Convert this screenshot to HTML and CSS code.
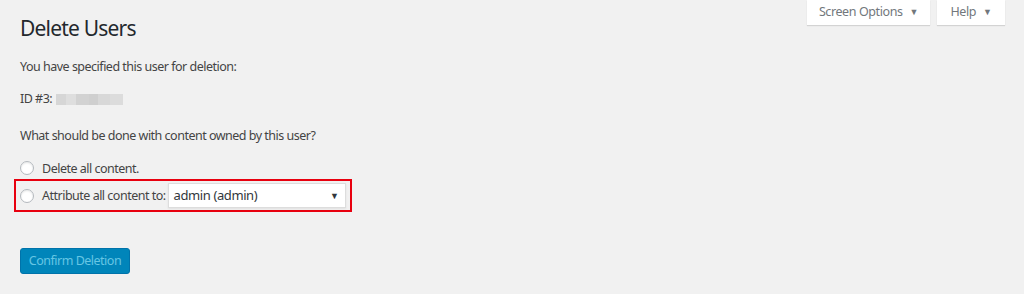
FILE: index.html
```html
<!DOCTYPE html>
<html>
<head>
<meta charset="utf-8">
<link rel="stylesheet" href="styles.css">
</head>
<body>
<div class="screen-meta">
  <button class="meta-btn meta-screen">Screen Options <span class="tri">&#9660;</span></button>
  <button class="meta-btn meta-help">Help <span class="tri">&#9660;</span></button>
</div>
<div class="wrap">
  <h1 class="title">Delete Users</h1>
  <p class="line l1">You have specified this user for deletion:</p>
  <p class="line l2">ID #3: <span class="blur"></span></p>
  <p class="line l3">What should be done with content owned by this user?</p>
  <div class="opt opt1"><span class="radio"></span><span>Delete all content.</span></div>
  <div class="highlight">
    <div class="opt opt2"><span class="radio"></span><span>Attribute all content to:</span>
      <div class="select"><span>admin (admin)</span><span class="arrow">&#9660;</span></div>
    </div>
  </div>
  <button class="confirm">Confirm Deletion</button>
</div>
</body>
</html>
```
FILE: styles.css
```css
html, body { margin: 0; padding: 0; }
body {
  background: #f1f1f1;
  font-family: "Noto Sans", "Open Sans", sans-serif;
  font-size: 12.5px;
  color: #444;
  width: 1024px;
  height: 294px;
  overflow: hidden;
  white-space: nowrap;
}
.screen-meta {
  float: right;
  display: flex;
  gap: 7px;
  margin-right: 19px;
}
.meta-btn {
  font-family: inherit;
  font-size: 12.5px;
  letter-spacing: -0.4px;
  color: #72777c;
  background: #fff;
  border: none;
  box-shadow: 0 1px 1px rgba(0,0,0,0.12);
  height: 25px;
  padding: 0 0 2px 0;
  display: flex;
  align-items: center;
  justify-content: center;
  gap: 7px;
  white-space: nowrap;
}
.meta-screen { width: 123px; }
.meta-help { width: 68px; }
.tri { font-size: 9px; color: #72777c; }
.wrap { padding-left: 20px; padding-top: 14px; }
.title {
  margin: 0;
  font-size: 21px;
  font-weight: 400;
  color: #23282d;
  line-height: 29px;
  letter-spacing: -0.8px;
}
.line { margin: 0; line-height: 18px; letter-spacing: -0.5px; }
.l1 { margin-top: 15px; }
.l2 { margin-top: 14px; display: flex; align-items: center; gap: 4px; }
.l3 { margin-top: 19px; }
.blur {
  display: inline-block;
  width: 67px;
  height: 11px;
  background: linear-gradient(90deg, #d6d6d6 0 15%, #dedede 15% 30%, #d2d2d2 30% 50%, #cfcfcf 50% 62%, #d8d8d8 62% 80%, #dcdcdc 80% 100%);
}
.opt { display: flex; align-items: center; gap: 8px; letter-spacing: -0.5px; }
.opt1 { margin-top: 14px; height: 18px; }
.radio {
  width: 12px; height: 12px;
  border: 1px solid #b4b9be;
  border-radius: 50%;
  background: #fff;
  box-shadow: inset 0 1px 2px rgba(0,0,0,0.1);
  flex: none;
}
.highlight {
  margin-left: -6px;
  margin-top: 2px;
  width: 330px;
  height: 29px;
  border: 2px solid #e8000f;
  padding: 0 0 0 4px;
  display: flex;
  align-items: center;
}
.opt2 { gap: 8px; }
.select {
  margin-left: -6px;
  height: 25px;
  background: #fff;
  border: 1px solid #ddd;
  box-shadow: 0 1px 2px rgba(0,0,0,0.07);
  display: flex;
  align-items: center;
  justify-content: space-between;
  padding: 0 6px 1px 5px;
  box-sizing: border-box;
  width: 178px;
  color: #32373c;
  font-size: 13px;
  letter-spacing: -0.4px;
}
.arrow { font-size: 9px; color: #32373c; }
.confirm {
  margin-top: 36px;
  width: 110px;
  height: 26px;
  background: #0085ba;
  border: 1px solid #0073aa;
  border-radius: 3px;
  color: #66c6e4;
  font-family: inherit;
  font-size: 12.5px;
  letter-spacing: -0.5px;
  padding: 0 0 2px 0;
}
```
